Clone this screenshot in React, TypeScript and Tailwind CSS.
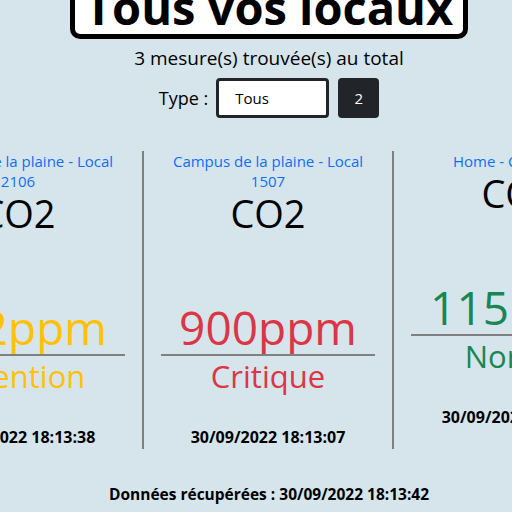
import React from 'react'

interface Mesure { lieu: string; type: string; valeur: string; etat: string; couleur: string; date: string }

const mesures: Mesure[] = [
  { lieu: 'Campus de la plaine - Local 2106', type: 'CO2', valeur: '652ppm', etat: 'Attention', couleur: 'text-[#ffc107]', date: '30/09/2022 18:13:38' },
  { lieu: 'Campus de la plaine - Local 1507', type: 'CO2', valeur: '900ppm', etat: 'Critique', couleur: 'text-[#dc3545]', date: '30/09/2022 18:13:07' },
  { lieu: 'Home - Chambre 1', type: 'CO2', valeur: '115ppm', etat: 'Normal', couleur: 'text-[#198754]', date: '30/09/2022 18:13:12' },
]

const Carte: React.FC<{ m: Mesure; border: string }> = ({ m, border }) => (
  <div className={`w-[250px] shrink-0 flex flex-col items-center px-[17px] pb-[2px] ${border}`}>
    <a className="text-[15px] leading-[20px] text-[#0d6efd] text-center px-[10px]">{m.lieu}</a>
    <div className="text-[38px] leading-[44px] text-black">{m.type}</div>
    <div className={`text-[46px] leading-[52px] mt-[66px] ${m.couleur}`}>{m.valeur}</div>
    <div className="w-full h-[2px] bg-[#808080] mt-[1px]" />
    <div className={`text-[31px] leading-[40px] ${m.couleur}`}>{m.etat}</div>
    <div className="text-[16px] leading-[20px] font-bold mt-[31px] text-black">{m.date}</div>
  </div>
)

export default function App() {
  return (
    <div className="w-[512px] h-[512px] overflow-hidden bg-[#d6e5ec]" style={{ fontFamily: '"Open Sans", "Noto Sans", sans-serif' }}>
      <div className="w-[538px] flex flex-col items-center">
        <h1 className="mt-[-25px] bg-white border-[5px] border-black rounded-[10px] px-[10px] text-[47px] leading-[54px] font-bold text-black">Tous vos locaux</h1>
        <p className="mt-[7px] text-[19px] leading-[24px] text-black">3 mesure(s) trouvée(s) au total</p>
        <div className="mt-[8px] flex items-center">
          <span className="text-[18px] text-black mr-[8px]">Type :</span>
          <div className="w-[113px] h-[40px] bg-white border-[3px] border-[#212529] rounded-[4px] flex items-center pl-[16px] text-[15px] text-black">Tous</div>
          <button className="ml-[9px] w-[41px] h-[40px] bg-[#212529] rounded-[4px] text-white text-[15px]">2</button>
        </div>
        <div className="mt-[33px] w-full flex justify-center">
          {mesures.map((m, i) => (
            <Carte key={i} m={m} border={i < 2 ? 'border-r-2 border-[#808080]' : ''} />
          ))}
        </div>
        <p className="mt-[34px] text-[15.5px] font-bold text-black">Données récupérées : 30/09/2022 18:13:42</p>
      </div>
    </div>
  )
}
